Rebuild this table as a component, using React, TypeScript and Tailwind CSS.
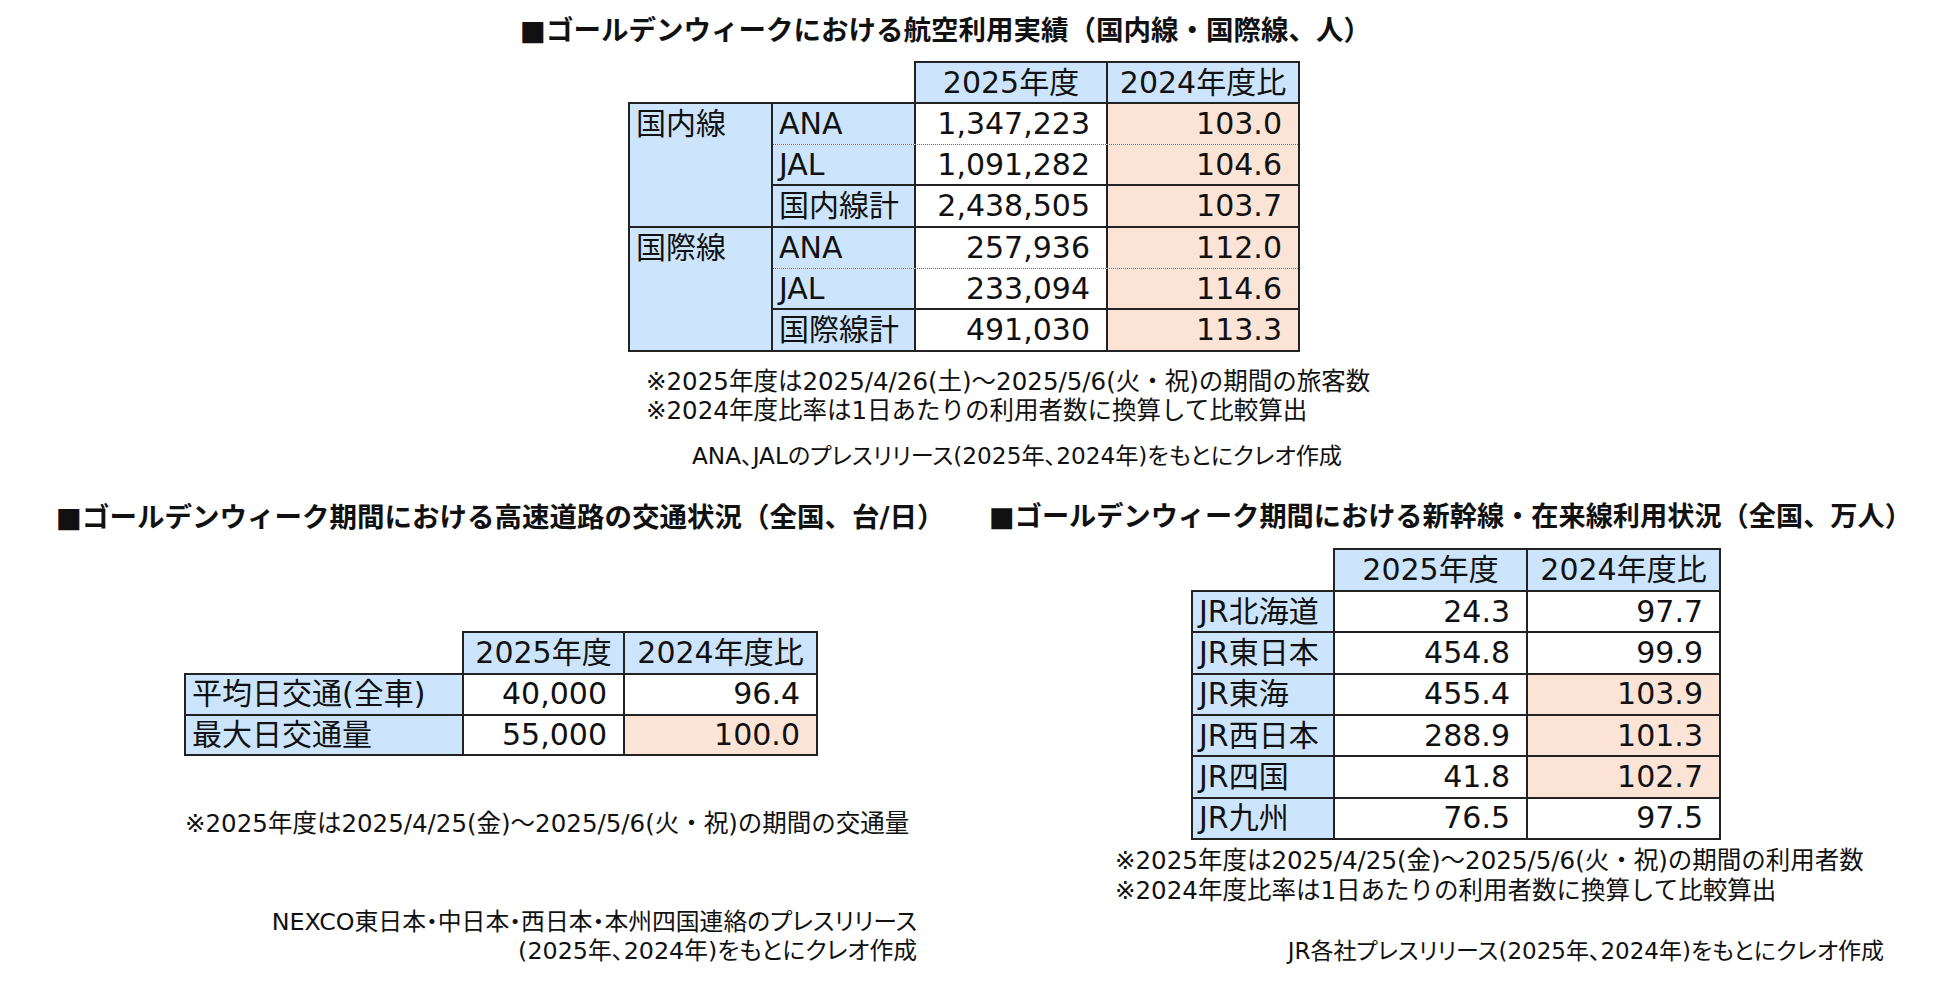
import React from "react";

type Row = [string, string, string, boolean];

const B = "border-[#222]";

function AirGroup({ label, rows, last }: { label: string; rows: Row[]; last?: boolean }) {
  return (
    <div className={`flex min-h-0 flex-1 ${last ? "" : "border-b-2 border-[#222]"}`}>
      <div className="w-[143px] shrink-0 border-r-2 border-[#222] bg-[#cde5fc] pl-[6px] leading-[40px]">{label}</div>
      <div className="flex min-h-0 flex-1 flex-col">
        {rows.map((r, i) => (
          <div
            key={i}
            className={`flex min-h-0 flex-1 ${i === 0 ? "border-b border-dotted border-[#666]" : i === 1 ? "border-b-2 border-[#222]" : ""}`}
          >
            <div className="flex w-[143px] shrink-0 items-center border-r-2 border-[#222] bg-[#cde5fc] pl-[6px]">{r[0]}</div>
            <div className="flex w-[192px] shrink-0 items-center justify-end border-r-2 border-[#222] bg-white pr-[16px]">{r[1]}</div>
            <div className={`flex flex-1 items-center justify-end pr-[16px] ${r[3] ? "bg-[#fbe4d6]" : "bg-white"}`}>{r[2]}</div>
          </div>
        ))}
      </div>
    </div>
  );
}

function AirTable() {
  return (
    <div className="ml-[628px] w-[672px] text-[30px] leading-[34px]">
      <div className={`ml-[286px] flex h-[41px] w-[386px] border-2 border-b-0 ${B}`}>
        <div className="flex w-[192px] items-center justify-center border-r-2 border-[#222] bg-[#cde5fc]">2025年度</div>
        <div className="flex flex-1 items-center justify-center bg-[#cde5fc]">2024年度比</div>
      </div>
      <div className={`flex h-[250px] flex-col border-2 ${B}`}>
        <AirGroup
          label="国内線"
          rows={[
            ["ANA", "1,347,223", "103.0", true],
            ["JAL", "1,091,282", "104.6", true],
            ["国内線計", "2,438,505", "103.7", true],
          ]}
        />
        <AirGroup
          label="国際線"
          last
          rows={[
            ["ANA", "257,936", "112.0", true],
            ["JAL", "233,094", "114.6", true],
            ["国際線計", "491,030", "113.3", true],
          ]}
        />
      </div>
    </div>
  );
}

function RoadTable() {
  const rows: Row[] = [
    ["平均日交通(全車)", "40,000", "96.4", false],
    ["最大日交通量", "55,000", "100.0", true],
  ];
  return (
    <div className="ml-[184px] w-[634px] text-[30px] leading-[34px]">
      <div className={`ml-[278px] flex h-[42px] w-[356px] border-2 border-b-0 ${B}`}>
        <div className="flex w-[161px] items-center justify-center border-r-2 border-[#222] bg-[#cde5fc]">2025年度</div>
        <div className="flex flex-1 items-center justify-center bg-[#cde5fc]">2024年度比</div>
      </div>
      <div className={`flex h-[83px] flex-col border-2 ${B}`}>
        {rows.map((r, i) => (
          <div key={i} className={`flex min-h-0 flex-1 ${i === 0 ? "border-b-2 border-[#222]" : ""}`}>
            <div className="flex w-[278px] shrink-0 items-center border-r-2 border-[#222] bg-[#cde5fc] pl-[6px]">{r[0]}</div>
            <div className="flex w-[161px] shrink-0 items-center justify-end border-r-2 border-[#222] bg-white pr-[16px]">{r[1]}</div>
            <div className={`flex flex-1 items-center justify-end pr-[16px] ${r[3] ? "bg-[#fbe4d6]" : "bg-white"}`}>{r[2]}</div>
          </div>
        ))}
      </div>
    </div>
  );
}

function RailTable() {
  const rows: Row[] = [
    ["JR北海道", "24.3", "97.7", false],
    ["JR東日本", "454.8", "99.9", false],
    ["JR東海", "455.4", "103.9", true],
    ["JR西日本", "288.9", "101.3", true],
    ["JR四国", "41.8", "102.7", true],
    ["JR九州", "76.5", "97.5", false],
  ];
  return (
    <div className="ml-[216px] w-[530px] text-[30px] leading-[34px]">
      <div className={`ml-[142px] flex h-[42px] w-[388px] border-2 border-b-0 ${B}`}>
        <div className="flex w-[193px] items-center justify-center border-r-2 border-[#222] bg-[#cde5fc]">2025年度</div>
        <div className="flex flex-1 items-center justify-center bg-[#cde5fc]">2024年度比</div>
      </div>
      <div className={`flex h-[250px] flex-col border-2 ${B}`}>
        {rows.map((r, i) => (
          <div key={i} className={`flex min-h-0 flex-1 ${i < rows.length - 1 ? "border-b-2 border-[#222]" : ""}`}>
            <div className="flex w-[142px] shrink-0 items-center border-r-2 border-[#222] bg-[#cde5fc] pl-[6px]">{r[0]}</div>
            <div className="flex w-[193px] shrink-0 items-center justify-end border-r-2 border-[#222] bg-white pr-[16px]">{r[1]}</div>
            <div className={`flex flex-1 items-center justify-end pr-[16px] ${r[3] ? "bg-[#fbe4d6]" : "bg-white"}`}>{r[2]}</div>
          </div>
        ))}
      </div>
    </div>
  );
}

export default function App() {
  return (
    <div className="h-[985px] w-[1950px] overflow-hidden bg-white font-['DejaVu_Sans','Noto_Sans_CJK_JP',sans-serif] text-[#111]">
      <div className="pl-[520px] pt-[12px] text-[27.5px] font-bold leading-[36px]">
        ■ゴールデンウィークにおける航空利用実績（国内線・国際線、人）
      </div>
      <div className="mt-[13px]">
        <AirTable />
      </div>
      <div className="mt-[15px] pl-[646px] text-[24.5px] leading-[29px]">
        <div>※2025年度は2025/4/26(土)～2025/5/6(火・祝)の期間の旅客数</div>
        <div>※2024年度比率は1日あたりの利用者数に換算して比較算出</div>
      </div>
      <div className="mt-[16px] pl-[692px] text-[23.2px] leading-[29px] [font-feature-settings:'palt']">
        ANA、JALのプレスリリース(2025年、2024年)をもとにクレオ作成
      </div>
      <div className="mt-[29px] flex">
        <div className="w-[975px] shrink-0">
          <div className="pl-[56px] text-[27.5px] font-bold leading-[36px]">
            ■ゴールデンウィーク期間における高速道路の交通状況（全国、台/日）
          </div>
          <div className="mt-[96px]">
            <RoadTable />
          </div>
          <div className="mt-[53px] pl-[185px] text-[24.5px] leading-[29px]">
            ※2025年度は2025/4/25(金)～2025/5/6(火・祝)の期間の交通量
          </div>
          <div className="mt-[70px] w-[917px] text-right text-[23.8px] leading-[29px] [font-feature-settings:'palt']">
            <div>NEXCO東日本・中日本・西日本・本州四国連絡のプレスリリース</div>
            <div>(2025年、2024年)をもとにクレオ作成</div>
          </div>
        </div>
        <div className="flex-1">
          <div className="pl-[14px] text-[27.2px] font-bold leading-[36px]">
            ■ゴールデンウィーク期間における新幹線・在来線利用状況（全国、万人）
          </div>
          <div className="mt-[13px]">
            <RailTable />
          </div>
          <div className="mt-[6px] pl-[140px] text-[24.5px] leading-[30px]">
            <div>※2025年度は2025/4/25(金)～2025/5/6(火・祝)の期間の利用者数</div>
            <div>※2024年度比率は1日あたりの利用者数に換算して比較算出</div>
          </div>
          <div className="mt-[31px] w-[909px] text-right text-[23px] leading-[29px] [font-feature-settings:'palt']">
            JR各社プレスリリース(2025年、2024年)をもとにクレオ作成
          </div>
        </div>
      </div>
    </div>
  );
}
